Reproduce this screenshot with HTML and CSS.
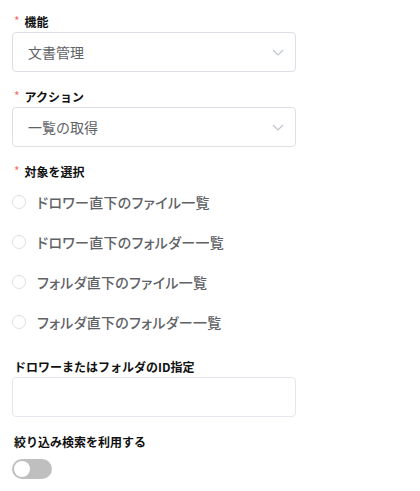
FILE: index.html
```html
<!DOCTYPE html>
<html lang="ja">
<head>
<meta charset="utf-8">
<link rel="stylesheet" href="styles.css">
</head>
<body>
<form class="form">
  <div class="field">
    <label class="label required">機能</label>
    <div class="select">
      <span class="select-value">文書管理</span>
      <svg class="chevron" width="12" height="7" viewBox="0 0 12 7"><path d="M1 1l5 5 5-5" fill="none" stroke="#c0c4cc" stroke-width="1.2"/></svg>
    </div>
  </div>
  <div class="field">
    <label class="label required">アクション</label>
    <div class="select">
      <span class="select-value">一覧の取得</span>
      <svg class="chevron" width="12" height="7" viewBox="0 0 12 7"><path d="M1 1l5 5 5-5" fill="none" stroke="#c0c4cc" stroke-width="1.2"/></svg>
    </div>
  </div>
  <div class="field">
    <label class="label required">対象を選択</label>
    <div class="radios">
      <label class="radio"><span class="circle"></span><span class="radio-text">ドロワー直下のファイル一覧</span></label>
      <label class="radio"><span class="circle"></span><span class="radio-text">ドロワー直下のフォルダー一覧</span></label>
      <label class="radio"><span class="circle"></span><span class="radio-text">フォルダ直下のファイル一覧</span></label>
      <label class="radio"><span class="circle"></span><span class="radio-text">フォルダ直下のフォルダー一覧</span></label>
    </div>
  </div>
  <div class="field">
    <label class="label">ドロワーまたはフォルダのID指定</label>
    <div class="input"></div>
  </div>
  <div class="field">
    <label class="label">絞り込み検索を利用する</label>
    <div class="switch-row"><span class="switch"><span class="knob"></span></span></div>
  </div>
</form>
</body>
</html>
```
FILE: styles.css
```css
html, body {
  margin: 0;
  padding: 0;
  background: #fff;
}
body {
  font-family: "Noto Sans CJK JP", "Noto Sans", sans-serif;
  padding: 12px;
}
.form {
  width: 284px;
  display: flex;
  flex-direction: column;
  gap: 15px;
}
.field {
  display: flex;
  flex-direction: column;
}
.label {
  display: block;
  height: 20px;
  line-height: 20px;
  font-size: 12px;
  font-weight: 700;
  color: #111;
  padding-left: 2px;
}
.required::before {
  content: "*";
  color: #f56c6c;
  font-weight: 400;
  font-size: 12px;
  margin-right: 5px;
  position: relative;
  top: -1px;
}
.select {
  box-sizing: border-box;
  height: 40px;
  border: 1px solid #dcdfe6;
  border-radius: 4px;
  display: flex;
  align-items: center;
  justify-content: space-between;
  padding: 0 11px 0 15px;
}
.select-value {
  font-size: 14px;
  color: #606266;
}
.chevron {
  display: block;
}
.radios {
  display: flex;
  flex-direction: column;
}
.radio {
  height: 40px;
  display: flex;
  align-items: center;
  gap: 11px;
}
.circle {
  box-sizing: border-box;
  width: 14px;
  height: 14px;
  border: 1px solid #dcdfe6;
  border-radius: 50%;
  background: #fff;
}
.radio-text {
  font-size: 14px;
  color: #606266;
  font-weight: 500;
  font-feature-settings: "palt";
  letter-spacing: 0.3px;
}
.input {
  box-sizing: border-box;
  height: 40px;
  border: 1px solid #e4e7ed;
  border-radius: 4px;
}
.switch-row {
  height: 34px;
  display: flex;
  align-items: center;
}
.switch {
  position: relative;
  width: 40px;
  height: 20px;
  border-radius: 10px;
  background: #bfbfbf;
}
.knob {
  position: absolute;
  left: 2px;
  top: 2px;
  width: 16px;
  height: 16px;
  border-radius: 50%;
  background: #fff;
}
```
